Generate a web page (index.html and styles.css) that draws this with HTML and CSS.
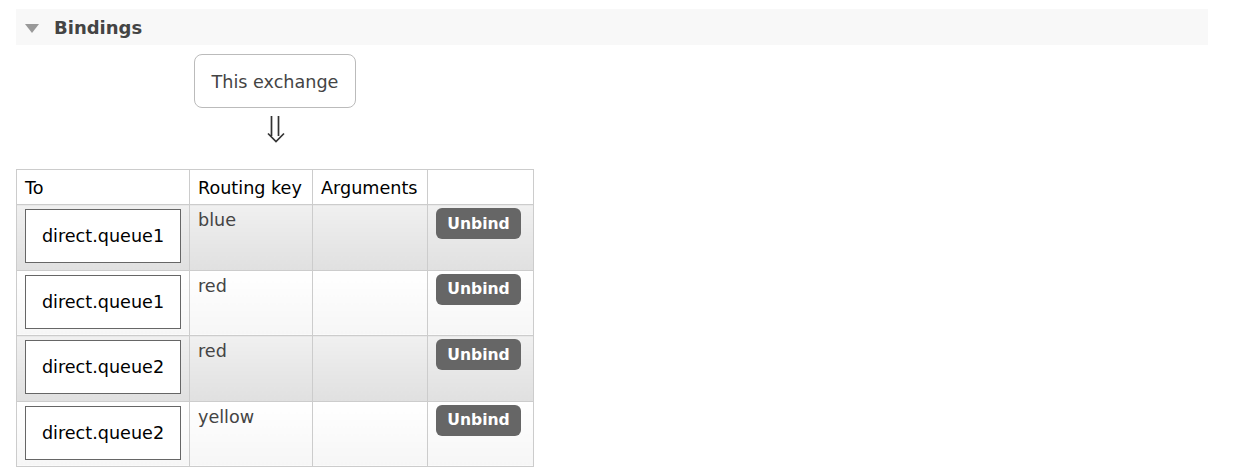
FILE: index.html
```
<!DOCTYPE html>
<html>
<head>
<meta charset="utf-8">
<link rel="stylesheet" href="styles.css">
</head>
<body>
<div class="page">
  <div class="section-head">
    <span class="tri"></span>
    <h2>Bindings</h2>
  </div>
  <div class="source">
    <div class="exchange">This exchange</div>
    <div class="arrow">
      <svg width="18" height="27" viewBox="0 0 18 27" aria-label="&#8659;">
        <path d="M4.5 0 V20 M11.5 0 V20 M1 17.5 L9 25.5 L17 17.5" fill="none" stroke="#333" stroke-width="1.7"/>
      </svg>
    </div>
  </div>
  <table class="list">
    <thead>
      <tr><th class="c1">To</th><th class="c2">Routing key</th><th class="c3">Arguments</th><th class="c4"></th></tr>
    </thead>
    <tbody>
      <tr class="alt1"><td><div class="queue">direct.queue1</div></td><td class="key">blue</td><td></td><td><button class="unbind">Unbind</button></td></tr>
      <tr class="alt2"><td><div class="queue">direct.queue1</div></td><td class="key">red</td><td></td><td><button class="unbind">Unbind</button></td></tr>
      <tr class="alt1"><td><div class="queue">direct.queue2</div></td><td class="key">red</td><td></td><td><button class="unbind">Unbind</button></td></tr>
      <tr class="alt2"><td><div class="queue">direct.queue2</div></td><td class="key">yellow</td><td></td><td><button class="unbind">Unbind</button></td></tr>
    </tbody>
  </table>
</div>
</body>
</html>
```
FILE: styles.css
```
html, body {
  margin: 0;
  padding: 0;
  background: #fff;
}
body {
  font-family: "DejaVu Sans", Verdana, sans-serif;
  font-size: 17.6px;
  color: #444;
}
.page {
  padding: 9px 0 0 16px;
  width: 1192px;
}
.section-head {
  display: flex;
  align-items: center;
  height: 36px;
  background: #f8f8f8;
}
.tri {
  width: 0;
  height: 0;
  margin-left: 9px;
  border-left: 7px solid transparent;
  border-right: 7px solid transparent;
  border-top: 9px solid #999;
  margin-top: 2px;
}
.section-head h2 {
  margin: 0 0 0 15px;
  font-size: 18px;
  font-weight: bold;
  color: #444;
}
.source {
  margin: 9px 0 0 178px;
  width: 162px;
  display: flex;
  flex-direction: column;
  align-items: center;
}
.exchange {
  box-sizing: border-box;
  width: 162px;
  height: 54px;
  border: 1px solid #bbb;
  border-radius: 8px;
  display: flex;
  align-items: center;
  justify-content: center;
  color: #444;
  padding-top: 1px;
}
.arrow {
  height: 61px;
  padding-top: 8px;
  box-sizing: border-box;
  margin-left: 1px;
}
.arrow svg {
  display: block;
}
table.list {
  border-collapse: collapse;
  table-layout: fixed;
  width: 518px;
}
table.list th, table.list td {
  border: 1px solid #ccc;
  padding: 4px 8px 6.5px;
  vertical-align: top;
  text-align: left;
}
table.list th {
  font-weight: normal;
  color: #000;
  background: #fff;
  height: 35px;
  padding: 2px 8px 0;
  vertical-align: middle;
  box-sizing: border-box;
}
.c1 { width: 173px; }
.c2 { width: 123px; }
.c3 { width: 115px; }
.c4 { width: 106px; }
tr.alt1 td { background: linear-gradient(#f0f0f0, #e0e0e0); }
tr.alt2 td { background: linear-gradient(#ffffff, #f6f6f6); }
.queue {
  box-sizing: border-box;
  width: 156px;
  height: 54px;
  border: 1px solid #666;
  background: #fff;
  color: #000;
  display: flex;
  align-items: center;
  justify-content: center;
}
td.key {
  line-height: 22px;
  padding-top: 4px;
  color: #444;
}
.unbind {
  display: block;
  width: 85px;
  height: 31px;
  margin-top: -1px;
  border: none;
  border-radius: 6px;
  background: #666;
  color: #fff;
  font-family: "DejaVu Sans", Verdana, sans-serif;
  font-size: 15.6px;
  font-weight: bold;
  padding: 0;
}
```
